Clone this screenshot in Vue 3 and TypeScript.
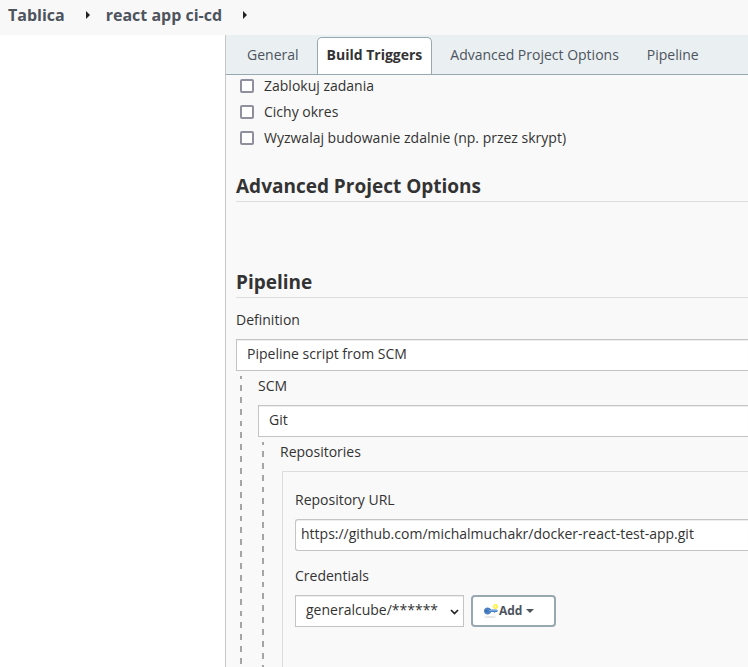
<script setup lang="ts">
import { ref } from 'vue'

const crumbs: string[] = ['Tablica', 'react app ci-cd']
const tabs: string[] = ['General', 'Build Triggers', 'Advanced Project Options', 'Pipeline']
const activeTab = ref('Build Triggers')

const triggers = ref([
  { id: 'disabled', label: 'Zablokuj zadania', checked: false },
  { id: 'quiet', label: 'Cichy okres', checked: false },
  { id: 'remote', label: 'Wyzwalaj budowanie zdalnie (np. przez skrypt)', checked: false },
])

const definition = ref('Pipeline script from SCM')
const scm = ref('Git')
const repositoryUrl = ref('https://github.com/michalmuchakr/docker-react-test-app.git')
const credentials = ref('generalcube/******')
</script>

<template>
  <div class="page">
    <nav class="breadcrumbs">
      <template v-for="crumb in crumbs" :key="crumb">
        <a href="#">{{ crumb }}</a>
        <svg class="crumb-arrow" width="4" height="8" viewBox="0 0 4 8"><path d="M0 0L4 4L0 8Z" fill="#222" /></svg>
      </template>
    </nav>

    <main class="panel">
      <div class="tabs">
        <button
          v-for="tab in tabs"
          :key="tab"
          type="button"
          class="tab"
          :class="{ active: tab === activeTab }"
          @click="activeTab = tab"
        >{{ tab }}</button>
      </div>

      <form class="config" @submit.prevent>
        <div class="triggers">
          <label v-for="item in triggers" :key="item.id" class="check" :for="item.id">
            <input :id="item.id" v-model="item.checked" type="checkbox" />
            {{ item.label }}
          </label>
        </div>

        <h2 class="advanced">Advanced Project Options</h2>
        <h2>Pipeline</h2>

        <label class="caption first" for="definition">Definition</label>
        <select id="definition" v-model="definition" class="field wide">
          <option>Pipeline script from SCM</option>
        </select>

        <div class="nested">
          <label class="caption" for="scm">SCM</label>
          <select id="scm" v-model="scm" class="field wide">
            <option>Git</option>
          </select>

          <div class="nested">
            <div class="caption">Repositories</div>
            <section class="repository">
              <label class="caption" for="url">Repository URL</label>
              <input id="url" v-model="repositoryUrl" type="text" class="field url" />

              <label class="caption spaced" for="credentials">Credentials</label>
              <div class="credentials">
                <div class="picker">
                  <select id="credentials" v-model="credentials" class="field">
                    <option>generalcube/******</option>
                  </select>
                  <svg class="chevron" width="9" height="6" viewBox="0 0 9 6"><path d="M1 1L4.500 4.500L8 1" fill="none" stroke="#222" stroke-width="1.700" /></svg>
                </div>
                <button type="button" class="add">
                  <svg width="16" height="16" viewBox="0 0 16 16">
                    <ellipse cx="7" cy="14" rx="6" ry="1" fill="#e6e6e6" />
                    <circle cx="12.500" cy="3.500" r="1.700" fill="#fffcd8" stroke="#fff23f" stroke-width="1.600" />
                    <path d="M4.500 4.500C6.500 4.500 7.500 5.500 8 6.500H13.500L15 7.800L14 9H12.500L11.500 10L10.500 9H8C7.500 10.300 6.500 11.500 4.500 11.500C2.500 11.500 1 10 1 8S2.500 4.500 4.500 4.500Z" fill="#4a80c3" />
                    <path d="M6 7.500H14" stroke="#7da8dc" />
                    <circle cx="3.300" cy="8" r="1" fill="#3565a3" />
                  </svg>
                  <span>Add</span>
                  <svg class="caret" width="8" height="4" viewBox="0 0 8 4"><path d="M0 0H8L4 4Z" fill="#4d545d" /></svg>
                </button>
              </div>
            </section>
          </div>
        </div>
      </form>
    </main>
  </div>
</template>

<style>
body {
  margin: 0;
  background: #fff;
}
</style>

<style scoped>
.page {
  display: flex;
  flex-direction: column;
  min-height: 100vh;
  overflow: hidden;
  font-family: "Open Sans", "Noto Sans", sans-serif;
  font-size: 14px;
  line-height: 20px;
  color: #333;
}

.page *,
.page {
  box-sizing: border-box;
}

.breadcrumbs {
  display: flex;
  align-items: center;
  height: 35px;
  padding: 0 8px 5px;
  background: #f8f8f8;
  font-size: 16px;
  font-weight: 700;
}

.breadcrumbs a {
  color: #4d545d;
  text-decoration: none;
}

.crumb-arrow {
  margin: 0 16px 0 21px;
}

.panel {
  flex: 1;
  margin-left: 225px;
  border-left: 1px solid #c6c6c6;
  background: #f9f9f9;
}

.tabs {
  display: flex;
  align-items: flex-end;
  gap: 8px;
  height: 40px;
  padding-left: 11px;
  background: #eaeff2;
  border-bottom: 1px solid #98a8b1;
}

.tab {
  flex: none;
  height: 37px;
  margin: 0;
  padding: 0 9px 2px;
  border: 1px solid transparent;
  border-bottom: 0;
  border-radius: 5px 5px 0 0;
  background: transparent;
  color: #4d545d;
  font: inherit;
  white-space: nowrap;
}

.tab.active {
  border-color: #98a8b1;
  background: #fff;
  color: #333;
  font-weight: 700;
}

.config {
  padding-left: 10px;
}

.triggers {
  display: grid;
  gap: 4px;
  margin-bottom: 21px;
}

.check {
  display: flex;
  align-items: center;
  gap: 10px;
  height: 22px;
  padding-left: 4px;
}

.check input {
  appearance: none;
  width: 14px;
  height: 14px;
  margin: 0;
  border: 2px solid #8f8f9d;
  border-radius: 2px;
  background: #fff;
}

.check input:checked {
  background: #3c74bb;
}

h2 {
  margin: 0;
  height: 32px;
  border-bottom: 1px solid #ddd;
  font-size: 19px;
  line-height: 32px;
}

h2.advanced {
  margin-bottom: 64px;
}

.caption {
  display: block;
  margin-bottom: 9px;
}

.caption.first {
  margin-top: 12px;
}

.caption.spaced {
  margin-top: 15px;
}

.field {
  display: block;
  appearance: none;
  width: 100%;
  height: 32px;
  margin: 0;
  padding: 0 10px 2px;
  border: 1px solid #c4c4c4;
  border-radius: 0;
  background: #fff;
  box-shadow: inset 0 1px 1px #00000013;
  color: #333;
  font: inherit;
}

.field.wide {
  border-right: 0;
}

.field.url {
  padding: 0 5px 3px;
  border-right: 0;
  border-radius: 3px 0 0 3px;
}

/* Dashed guide beside each nested level */
.nested {
  margin: 5px 0 0 4px;
  padding-left: 18px;
  background: repeating-linear-gradient(
    #a5a5a5 0 3px, transparent 3px 9px,
    #a5a5a5 9px 15px, transparent 15px 21px,
    #a5a5a5 21px 27px, transparent 27px 33px,
    #a5a5a5 33px 39px, transparent 39px 45px,
    #a5a5a5 45px 50px, transparent 50px 56px,
    #a5a5a5 56px 62px, transparent 62px 68px,
    #a5a5a5 68px 74px, transparent 74px 80px,
    #a5a5a5 80px 86px, transparent 86px 92px,
    #a5a5a5 92px 95px
  ) left top / 2px 100% no-repeat;
}

.repository {
  min-height: 196px;
  margin-left: 2px;
  padding: 18px 0 0 12px;
  border: solid #ddd;
  border-width: 1px 0 0 1px;
}

.credentials {
  display: flex;
  gap: 7px;
}

.picker {
  position: relative;
}

.picker .field {
  width: auto;
  padding-right: 24px;
}

.chevron {
  position: absolute;
  top: 14px;
  right: 5px;
  pointer-events: none;
}

.add {
  display: flex;
  align-items: center;
  height: 32px;
  padding: 0 20px 0 10px;
  border: 2px solid #98a8b1;
  border-radius: 4px;
  background: #fff;
  color: #4d545d;
  font: inherit;
  font-size: 12px;
  font-weight: 700;
}

.caret {
  margin-left: 4px;
}
</style>
